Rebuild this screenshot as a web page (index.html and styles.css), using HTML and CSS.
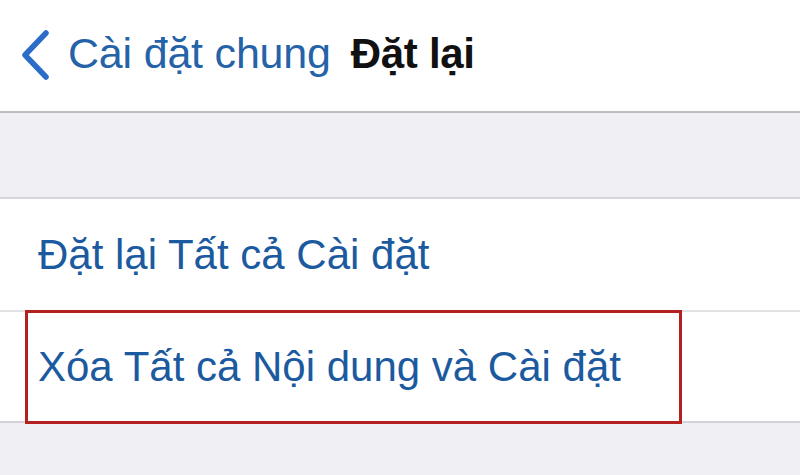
FILE: index.html
```html
<!DOCTYPE html>
<html lang="vi">
<head>
<meta charset="utf-8">
<link rel="stylesheet" href="styles.css">
</head>
<body>
<div class="screen">
  <header class="nav">
    <div class="back">
      <svg class="chev" width="30" height="50" viewBox="0 0 30 50"><path d="M26 3 L5 25 L26 47" fill="none" stroke="#2b6cc9" stroke-width="5.5" stroke-linecap="round" stroke-linejoin="round"/></svg>
      <span class="back-label">Cài đặt chung</span>
    </div>
    <h1 class="title">Đặt lại</h1>
  </header>
  <div class="gap"></div>
  <div class="group">
    <div class="row"><span class="row-label">Đặt lại Tất cả Cài đặt</span></div>
    <div class="row row-marked">
      <span class="row-label">Xóa Tất cả Nội dung và Cài đặt</span>
      <div class="mark"></div>
    </div>
  </div>
  <div class="rest"></div>
</div>
</body>
</html>
```

FILE: styles.css
```css
* { box-sizing: border-box; }
html, body { margin: 0; padding: 0; }
body {
  width: 800px;
  height: 475px;
  overflow: hidden;
  background: #efeff4;
  font-family: "Liberation Sans", Arial, sans-serif;
}
.screen { display: flex; flex-direction: column; height: 475px; }
.nav {
  height: 113px;
  background: #fff;
  border-bottom: 2px solid #bdbdc0;
  display: flex;
  align-items: center;
  padding: 0 0 4px 20px;
}
.back { display: flex; align-items: center; }
.chev { display: block; margin-right: 18px; margin-top: 2px; }
.back-label {
  font-size: 43px;
  color: #2563a8;
  letter-spacing: -0.2px;
}
.title {
  margin: 0 0 0 20px;
  font-size: 42px;
  font-weight: bold;
  color: #111;
  letter-spacing: -0.3px;
}
.gap {
  height: 86px;
  background: #efeff4;
  border-bottom: 2px solid #d6d6da;
}
.group { background: #fff; border-bottom: 2px solid #d3d3d7; }
.row {
  height: 111px;
  display: flex;
  align-items: center;
  padding-left: 38px;
}
.row + .row { border-top: 2px solid #e2e2e5; height: 111px; }
.row-label {
  font-size: 42px;
  color: #1c5aa0;
  letter-spacing: 0;
}
.row-marked { position: relative; }
.mark {
  position: absolute;
  left: 25px;
  top: -2px;
  width: 657px;
  height: 114px;
  border: 3px solid #b41f1f;
}
.rest { flex: 1; background: #efeff4; }
```
